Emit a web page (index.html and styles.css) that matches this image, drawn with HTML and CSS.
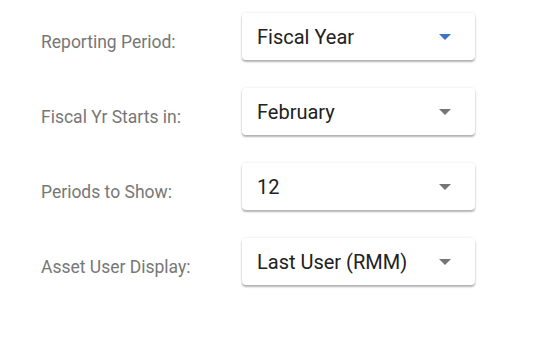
FILE: index.html
```html
<!DOCTYPE html>
<html lang="en">
<head>
    <meta charset="UTF-8">
    <meta name="viewport" content="width=device-width, initial-scale=1.0">
    <title>Settings</title>
    <link rel="stylesheet" href="styles.css">
</head>
<body>

    <div class="settings">
        <div class="setting-row">
            <div class="setting-label">Reporting Period:</div>
            <div class="select-box">
                <span class="select-value">Fiscal Year</span>
                <span class="select-arrow active"></span>
            </div>
        </div>

        <div class="setting-row">
            <div class="setting-label">Fiscal Yr Starts in:</div>
            <div class="select-box">
                <span class="select-value">February</span>
                <span class="select-arrow"></span>
            </div>
        </div>

        <div class="setting-row">
            <div class="setting-label">Periods to Show:</div>
            <div class="select-box">
                <span class="select-value">12</span>
                <span class="select-arrow"></span>
            </div>
        </div>

        <div class="setting-row">
            <div class="setting-label">Asset User Display:</div>
            <div class="select-box">
                <span class="select-value">Last User (RMM)</span>
                <span class="select-arrow"></span>
            </div>
        </div>
    </div>

</body>
</html>
```

FILE: styles.css
```css
/* Page */
body {
    margin: 0;
    background-color: #ffffff;
    font-family: Roboto, "Liberation Sans", sans-serif;
}

.settings {
    display: flex;
    flex-direction: column;
    gap: 28px;
    padding: 13px 0 54px 41px;
}

.setting-row {
    display: flex;
    align-items: flex-start;
}

.setting-label {
    width: 201px;
    margin-top: 18px;
    font-size: 17.5px;
    line-height: 22px;
    color: #777777;
}

/* Dropdown box */
.select-box {
    display: flex;
    align-items: center;
    justify-content: space-between;
    box-sizing: border-box;
    width: 233px;
    height: 47px;
    padding: 1px 24px 0 15px;
    background-color: #ffffff;
    border-radius: 4px;
    box-shadow: 0 2px 2px rgba(0, 0, 0, 0.28), 0 0 3px rgba(0, 0, 0, 0.1);
}

.select-value {
    font-size: 20px;
    line-height: 24px;
    color: #212121;
}

.select-arrow {
    width: 0;
    height: 0;
    border-left: 6px solid transparent;
    border-right: 6px solid transparent;
    border-top: 6px solid #757575;
}

.select-arrow.active {
    border-top-color: #3b73c6;
}
```
